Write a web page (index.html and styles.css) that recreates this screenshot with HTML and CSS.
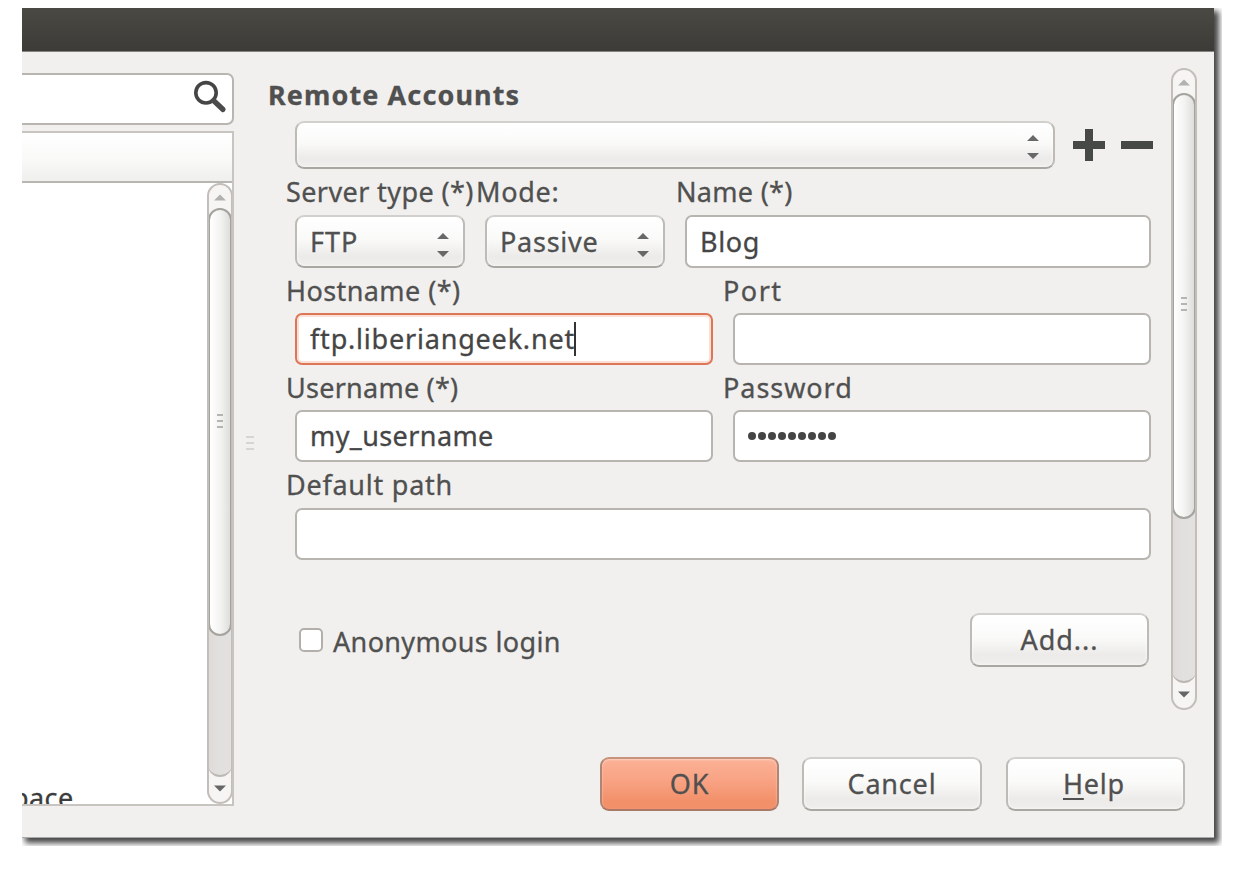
FILE: index.html
```html
<!DOCTYPE html>
<html lang="en">
<head>
<meta charset="utf-8">
<title>Remote Accounts</title>
<link rel="stylesheet" href="styles.css">
</head>
<body>
<div class="stage">
  <div class="window">
    <div class="titlebar"></div>
    <div class="content">
      <div class="sidebar">
        <div class="search">
          <svg class="search-icon" width="34" height="34" viewBox="0 0 34 34"><circle cx="13" cy="12.800" r="10.2" fill="none" stroke="#454545" stroke-width="3.600"/><path d="M20.500 20.500L30 29.500" stroke="#4b4b4b" stroke-width="5.200" stroke-linecap="round"/></svg>
        </div>
        <div class="tree">
          <div class="tree-head"></div>
          <div class="tree-body">
            <div class="tree-list"><span class="tree-item"><span class="t-pace">pace</span></span></div>
            <div class="scrollbar scroll-left">
              <div class="step step-up"><svg width="12" height="7" viewBox="0 0 12 7"><path d="M0 6.500L6 .5L12 6.500z" fill="#b2b2b0"/></svg></div>
              <div class="track"><div class="thumb"><i></i><i></i><i></i></div></div>
              <div class="step step-down"><svg width="12" height="7" viewBox="0 0 12 7"><path d="M0 .5L6 6.500L12 .5z" fill="#666"/></svg></div>
            </div>
          </div>
        </div>
      </div>
      <div class="splitter"><i></i><i></i><i></i></div>
      <div class="main">
        <div class="upper">
          <div class="form">
            <h1 class="heading"><span class="t-remote">Remote Accounts</span></h1>
            <div class="row account-row">
              <div class="combo account"><span></span><svg class="arrows" width="12" height="24" viewBox="0 0 12 24"><path d="M0 6L6 0L12 6z M0 18L6 24L12 18z" fill="#686868"/></svg></div>
              <svg class="plus" width="32" height="32" viewBox="0 0 32 32"><path d="M12 0H20V12H32V20H20V32H12V20H0V12H12z" fill="#474947"/></svg>
              <svg class="minus" width="32" height="32" viewBox="0 0 32 32"><path d="M0 12H32V20H0z" fill="#474947"/></svg>
            </div>
            <div class="labels l1"><span class="w-server"><span class="t-server">Server type (*)</span></span><span class="w-mode"><span class="t-mode">Mode:</span></span><span class="t-name">Name (*)</span></div>
            <div class="row r1">
              <div class="combo c-type"><span class="t-ftp">FTP</span><svg class="arrows" width="12" height="24" viewBox="0 0 12 24"><path d="M0 6L6 0L12 6z M0 18L6 24L12 18z" fill="#686868"/></svg></div>
              <div class="combo c-mode"><span class="t-passive">Passive</span><svg class="arrows" width="12" height="24" viewBox="0 0 12 24"><path d="M0 6L6 0L12 6z M0 18L6 24L12 18z" fill="#686868"/></svg></div>
              <div class="field grow"><span class="t-blog">Blog</span></div>
            </div>
            <div class="labels l2"><span class="w-half"><span class="t-host">Hostname (*)</span></span><span class="t-port">Port</span></div>
            <div class="row r2"><div class="field focus half"><span class="t-url">ftp.liberiangeek.net</span><b class="caret"></b></div><div class="field half"></div></div>
            <div class="labels l2"><span class="w-half"><span class="t-user">Username (*)</span></span><span class="t-pass">Password</span></div>
            <div class="row r2"><div class="field half"><span class="t-myuser">my_username</span></div><div class="field half dots"><i></i><i></i><i></i><i></i><i></i><i></i><i></i><i></i><i></i></div></div>
            <div class="labels l1"><span class="t-path">Default path</span></div>
            <div class="row r2"><div class="field grow"></div></div>
            <div class="row add-row"><span class="check"></span><span class="t-anon">Anonymous login</span><div class="button add"><span class="t-add">Add...</span></div></div>
          </div>
          <div class="scrollbar scroll-right">
            <div class="step step-up"><svg width="12" height="7" viewBox="0 0 12 7"><path d="M0 6.500L6 .5L12 6.500z" fill="#b2b2b0"/></svg></div>
            <div class="track"><div class="thumb"><i></i><i></i><i></i></div></div>
            <div class="step step-down"><svg width="12" height="7" viewBox="0 0 12 7"><path d="M0 .5L6 6.500L12 .5z" fill="#666"/></svg></div>
          </div>
        </div>
        <div class="actions">
          <div class="button ok"><span class="t-ok">OK</span></div>
          <div class="button cancel"><span class="t-cancel">Cancel</span></div>
          <div class="button help"><span class="t-help"><u>H</u>elp</span></div>
        </div>
      </div>
    </div>
  </div>
</div>
</body>
</html>
```
FILE: styles.css
```css
* { box-sizing: border-box; }
body { margin: 0; background: #fff; color: #505050; font: 27px/32px "Noto Sans", "Open Sans", sans-serif; overflow: hidden; -webkit-text-stroke: .3px currentColor; }
span { white-space: nowrap; }
.stage { margin: 8px 0 0 22px; width: 1200px; height: 838px; overflow: hidden; }
.window { width: 1192px; height: 830px; background: #f1f0ee; box-shadow: 4px 4px 6px 1px #444; border-bottom: 1px solid #aaa; }
.titlebar { height: 44px; background: linear-gradient(#4a4943, #3c3b37); border-bottom: 1px solid #85847f; }
.content { display: flex; }

.sidebar { width: 212px; padding-top: 21px; }
.search { height: 52px; border: 2px solid #b9b5b0; border-left: 0; border-radius: 0 7px 7px 0; background: #fff; display: flex; justify-content: flex-end; padding: 5px 5px 0 0; }
.tree { margin-top: 6px; height: 675px; border: 2px solid #c8c5c1; border-left: 0; }
.tree-head { height: 50px; background: linear-gradient(#fff, #f9f9f8 55%, #efefed); border-bottom: 2px solid #b9b6b2; }
.tree-body { display: flex; height: 621px; background: #fff; overflow: hidden; }
.tree-list { flex: 1; display: flex; align-items: flex-end; overflow: hidden; }
.tree-item { height: 22px; margin-left: -10px; color: #3c3c3c; }
.t-pace { letter-spacing: .4px; }

.scrollbar { width: 26px; display: flex; flex-direction: column; border: 2px solid #c3beba; border-radius: 13px; background: #f6f5f4; overflow: hidden; }
.scroll-left { margin-right: -1px; height: 621px; }
.step { height: 23px; display: flex; justify-content: center; }
.step-up { padding-top: 9px; }
.step-down { padding-top: 8px; height: 25px; }
.track { flex: 1; margin: 0 -1px; border-radius: 12px; border-bottom: 2px solid #bcb7b2; background: linear-gradient(90deg, #dedad8, #e2e0df 45%, #e2e1e0); }
.thumb { height: 426px; border: 2px solid #a5a39e; border-radius: 12px; background: linear-gradient(90deg, #fff, #f2f2f1 55%, #dededb); display: flex; flex-direction: column; align-items: center; justify-content: center; gap: 4px; padding-bottom: 4px; }
.scroll-left .thumb { height: 428px; padding-bottom: 2px; }
.thumb i { width: 6px; height: 2px; background: #b4b4b2; }
.splitter { width: 34px; padding: 384px 0 0 12px; display: flex; flex-direction: column; gap: 4px; }
.splitter i { width: 8px; height: 2px; background: #d6d5d3; }

.main { flex: 1; }
.upper { display: flex; height: 657px; }
.form { width: 883px; padding-left: 18px; }
.heading { margin: 27px 0 0 -18px; height: 42px; font-size: 27px; line-height: 32px; }
.t-remote { letter-spacing: 1.1px; }
.row { display: flex; margin-left: 9px; }
.combo, .button { border: 2px solid #c0bdb9; border-color: #d2d0cd #bebbb7 #aaa7a3 #bebbb7; border-radius: 9px; background: linear-gradient(#fff, #fafaf9 45%, #ecebea 80%, #efeeed); box-shadow: inset 0 0 3px #fff; }
.combo { display: flex; align-items: center; justify-content: space-between; padding: 0 14px 0 13px; }
.arrows { margin-top: 6px; }
.account-row { align-items: center; height: 48px; }
.account { flex: none; width: 760px; height: 48px; padding-right: 14px; }
.account .arrows { margin-top: 3px; }
.plus { flex: none; margin: 0 0 0 18px; }
.minus { flex: none; margin: 0 0 0 16px; }
.labels { display: flex; }
.l1 { height: 46px; line-height: 46px; }
.l2 { height: 45px; line-height: 45px; }
.w-server { width: 190px; }
.w-mode { width: 200px; }
.w-half { width: 437px; }
.t-server { letter-spacing: .4px; }
.t-mode { letter-spacing: .7px; }
.t-name { letter-spacing: .3px; }
.t-ftp { letter-spacing: 1px; }
.t-passive { letter-spacing: .75px; }
.t-blog { letter-spacing: .6px; }
.t-host { letter-spacing: .42px; }
.t-port { letter-spacing: 1.5px; }
.t-url { letter-spacing: .8px; }
.t-user { letter-spacing: .25px; }
.t-pass { letter-spacing: .95px; }
.t-myuser { letter-spacing: .4px; }
.t-path { letter-spacing: .75px; }
.r1 { height: 53px; gap: 20px; }
.c-type { width: 170px; }
.c-mode { width: 180px; }
.r2 { height: 52px; gap: 20px; }
.field { display: flex; align-items: center; padding-left: 13px; border: 2px solid #b8b5b1; border-radius: 7px; background: #fff; color: #454545; }
.grow { width: 466px; }
.r2 .grow { width: 856px; }
.half { width: 418px; }
.focus { border-color: #dc7656; box-shadow: inset 0 0 0 2px #fbe0d7; }
.caret { width: 2px; height: 34px; margin-left: -1px; background: #333; }
.dots { gap: 2px; padding-bottom: 1px; }
.dots i { width: 8px; height: 8px; border-radius: 50%; background: #444; }
.add-row { align-items: center; margin-top: 53px; height: 54px; }
.check { width: 24px; height: 24px; margin: 0 10px 0 4px; border: 2px solid #b3b0ac; border-radius: 5px; background: #fff; }
.t-anon { flex: 1; padding-top: 3px; letter-spacing: .35px; }
.button { width: 179px; height: 54px; display: flex; align-items: center; justify-content: center; }
.add { margin-right: 2px; }
.t-add { letter-spacing: 1px; }
.scroll-right { margin: 16px 0 0 20px; height: 642px; }
.actions { display: flex; gap: 24px; margin: 48px 0 0 332px; }
.ok { background: linear-gradient(#fbb196, #f8a283 45%, #f29069 85%); border-color: #c9927b #b08573 #a97866; box-shadow: inset 0 1px 2px #ffd5c5; }
.cancel { margin-left: -1px; width: 180px; }
.t-ok { letter-spacing: .8px; }
.t-cancel { letter-spacing: .8px; }
.t-help { letter-spacing: .8px; margin-left: -3px; }
u { text-decoration-thickness: 2px; text-underline-offset: 4px; }
```
